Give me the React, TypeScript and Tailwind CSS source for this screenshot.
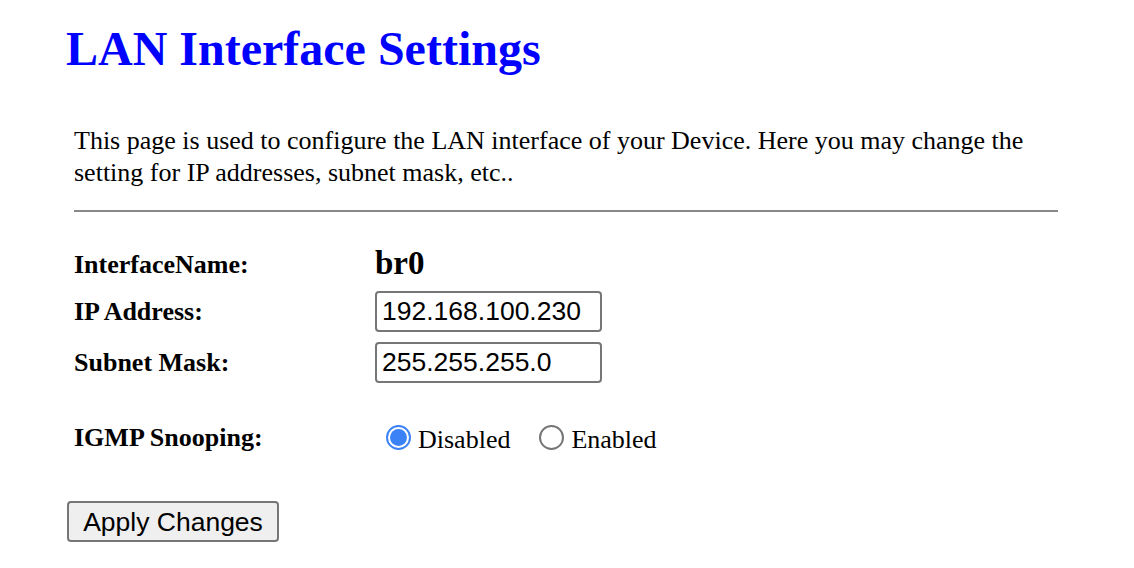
import { useState } from "react";

const serif = { fontFamily: '"Liberation Serif", "Times New Roman", serif' };

export default function App() {
  const [igmp, setIgmp] = useState("disabled");

  return (
    <div className="w-[1134px] h-[568px] bg-white text-black overflow-hidden" style={serif}>
      <div className="pl-[66px] pt-[21px]">
        <h1 className="text-[48px] leading-[56px] font-bold text-[#0000ff]">LAN Interface Settings</h1>
      </div>

      <div className="pl-[74px] pr-[76px] pt-[48px]">
        <p className="text-[26px] leading-[32px] w-[960px]">
          This page is used to configure the LAN interface of your Device. Here you may change the setting for IP
          addresses, subnet mask, etc..
        </p>

        <div className="mt-[21px] h-[2px] bg-[#888888]" />

        <div className="mt-[33px] flex flex-col">
          <div className="flex items-center h-[38px]">
            <span className="w-[301px] text-[26px] font-bold">InterfaceName:</span>
            <span className="text-[33px] font-bold">br0</span>
          </div>
          <div className="flex items-center mt-[8px] h-[41px]">
            <span className="w-[301px] text-[26px] font-bold">IP Address:</span>
            <input
              defaultValue="192.168.100.230"
              className="w-[227px] h-[41px] px-[5px] border-2 border-[#767676] rounded-[4px] text-[26.5px] font-['Liberation_Sans',Arial,sans-serif] outline-none"
            />
          </div>
          <div className="flex items-center mt-[10px] h-[41px]">
            <span className="w-[301px] text-[26px] font-bold">Subnet Mask:</span>
            <input
              defaultValue="255.255.255.0"
              className="w-[227px] h-[41px] px-[5px] border-2 border-[#767676] rounded-[4px] text-[26.5px] font-['Liberation_Sans',Arial,sans-serif] outline-none"
            />
          </div>
          <div className="flex items-center mt-[34px] h-[40px]">
            <span className="w-[301px] text-[26px] font-bold">IGMP Snooping:</span>
            <label className="flex items-center gap-[7px] text-[26px] cursor-pointer" onClick={() => setIgmp("disabled")}>
              <span
                className={`ml-[11px] w-[25px] h-[25px] rounded-full flex items-center justify-center border-2 ${
                  igmp === "disabled" ? "border-[#3b82f6]" : "border-[#767676]"
                }`}
              >
                {igmp === "disabled" && <span className="w-[17px] h-[17px] rounded-full bg-[#3b82f6]" />}
              </span>
              <span className="mt-[4px]">Disabled</span>
            </label>
            <label className="flex items-center gap-[7px] text-[26px] ml-[29px] cursor-pointer" onClick={() => setIgmp("enabled")}>
              <span
                className={`w-[25px] h-[25px] rounded-full flex items-center justify-center border-2 ${
                  igmp === "enabled" ? "border-[#3b82f6]" : "border-[#767676]"
                }`}
              >
                {igmp === "enabled" && <span className="w-[17px] h-[17px] rounded-full bg-[#3b82f6]" />}
              </span>
              <span className="mt-[4px]">Enabled</span>
            </label>
          </div>
        </div>

        <button className="mt-[44px] -ml-[7px] w-[212px] h-[41px] bg-[#efefef] border-2 border-[#767676] rounded-[4px] text-[26.5px] font-['Liberation_Sans',Arial,sans-serif]">
          Apply Changes
        </button>
      </div>
    </div>
  );
}
